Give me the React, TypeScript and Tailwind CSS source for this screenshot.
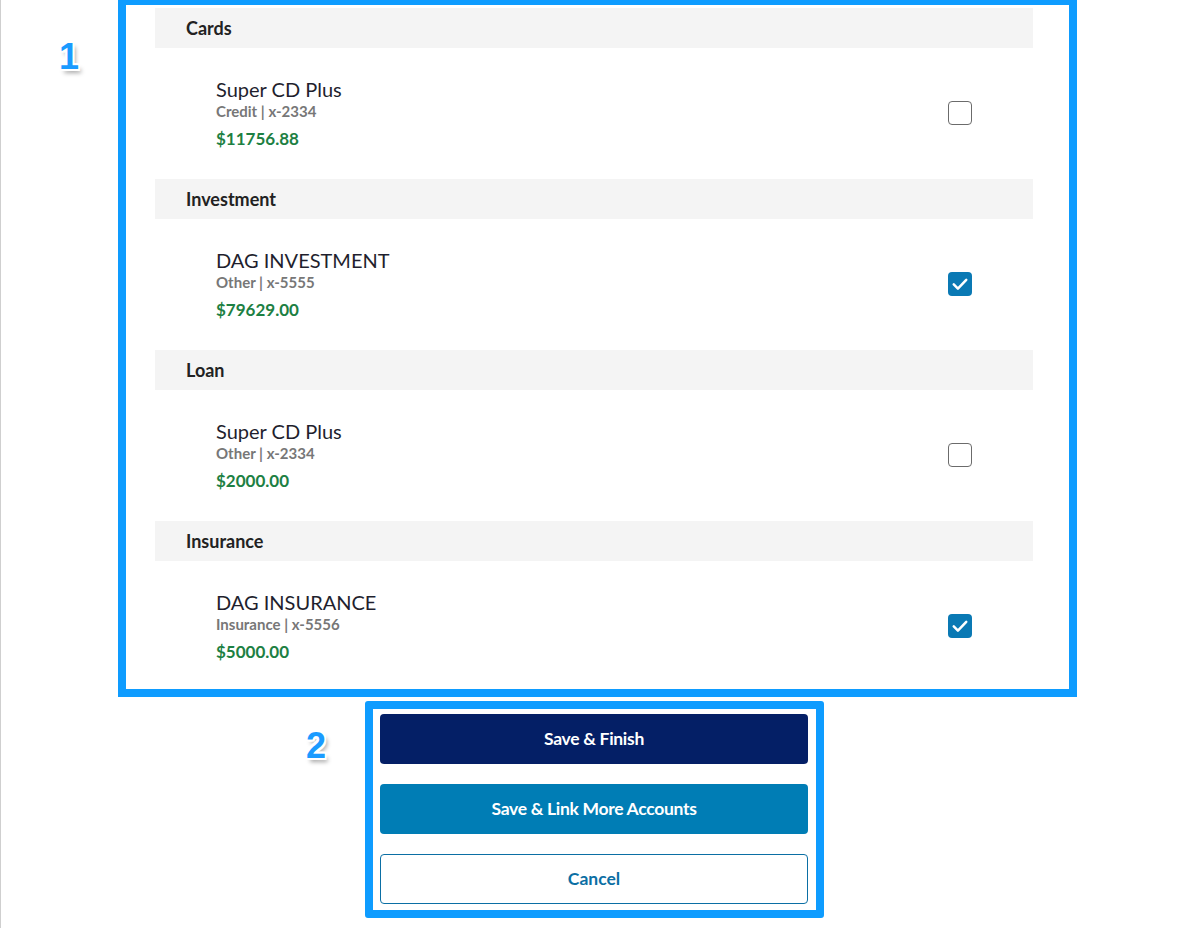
const groups = [
  { title: "Cards", name: "Super CD Plus", meta: "Credit | x-2334", amount: "$11756.88", checked: false },
  { title: "Investment", name: "DAG INVESTMENT", meta: "Other | x-5555", amount: "$79629.00", checked: true },
  { title: "Loan", name: "Super CD Plus", meta: "Other | x-2334", amount: "$2000.00", checked: false },
  { title: "Insurance", name: "DAG INSURANCE", meta: "Insurance | x-5556", amount: "$5000.00", checked: true },
];

const badge =
  "absolute font-['Liberation_Sans',Arial,sans-serif] text-[36px] font-bold leading-none text-[#1a9bff] [text-shadow:-2px_-2px_0_#fff,2px_-2px_0_#fff,-2px_2px_0_#fff,2px_2px_0_#fff,0_-2px_0_#fff,0_2px_0_#fff,3px_4px_4px_rgba(0,0,0,0.35)]";

function Box({ checked }: { checked: boolean }) {
  if (checked) {
    return (
      <span className="flex h-6 w-6 items-center justify-center rounded-[4px] bg-[#0a79b4]">
        <svg viewBox="0 0 24 24" className="h-[20px] w-[20px]" fill="none" stroke="#fff" strokeWidth={3} strokeLinecap="round" strokeLinejoin="round">
          <path d="M4.5 12.5l5 5L19.5 7" />
        </svg>
      </span>
    );
  }
  return <span className="h-6 w-6 rounded-[4px] border-[1.5px] border-[#6b6b6b] bg-white" />;
}

export default function App() {
  return (
    <div className="min-h-screen border-l border-[#cfcfcf] bg-white font-['Lato',sans-serif]">
      <div className="relative">
        <span className={`${badge} left-[58px] top-[39px]`}>1</span>
        <div className="ml-[117px] h-[697px] w-[959px] overflow-hidden border-x-8 border-b-8 border-t-[5px] border-[#0e9cff] pl-[29px] pr-[36px] pt-[3px]">
          {groups.map((g) => (
            <section key={g.title}>
              <div className="flex h-10 items-center bg-[#f4f4f4] pl-[31px] text-[18px] font-bold text-[#222]">{g.title}</div>
              <div className="flex items-center justify-between pb-[30px] pl-[61px] pr-[61px] pt-[29px]">
                <div>
                  <p className="text-[20px] leading-[25px] text-[#1f1f2e]">{g.name}</p>
                  <p className="text-[15px] font-bold leading-[18px] text-[#777]">{g.meta}</p>
                  <p className="mt-[9px] text-[17px] font-bold leading-5 text-[#1d8043]">{g.amount}</p>
                </div>
                <Box checked={g.checked} />
              </div>
            </section>
          ))}
        </div>
      </div>
      <div className="relative mt-1">
        <span className={`${badge} left-[305px] top-[27px]`}>2</span>
        <div className="ml-[364px] flex w-[459px] flex-col gap-5 rounded-[3px] border-8 border-[#0e9cff] pb-[6px] pl-[7px] pr-[8px] pt-[5px]">
          <button className="h-[50px] rounded-[4px] bg-[#041f66] text-[17.5px] font-bold tracking-[-0.3px] text-white">Save &amp; Finish</button>
          <button className="h-[50px] rounded-[4px] bg-[#007db5] text-[17.5px] font-bold tracking-[-0.3px] text-white">Save &amp; Link More Accounts</button>
          <button className="h-[50px] rounded-[4px] border border-[#0b6fa4] bg-white text-[17.5px] font-bold text-[#0b6fa4]">Cancel</button>
        </div>
      </div>
    </div>
  );
}
